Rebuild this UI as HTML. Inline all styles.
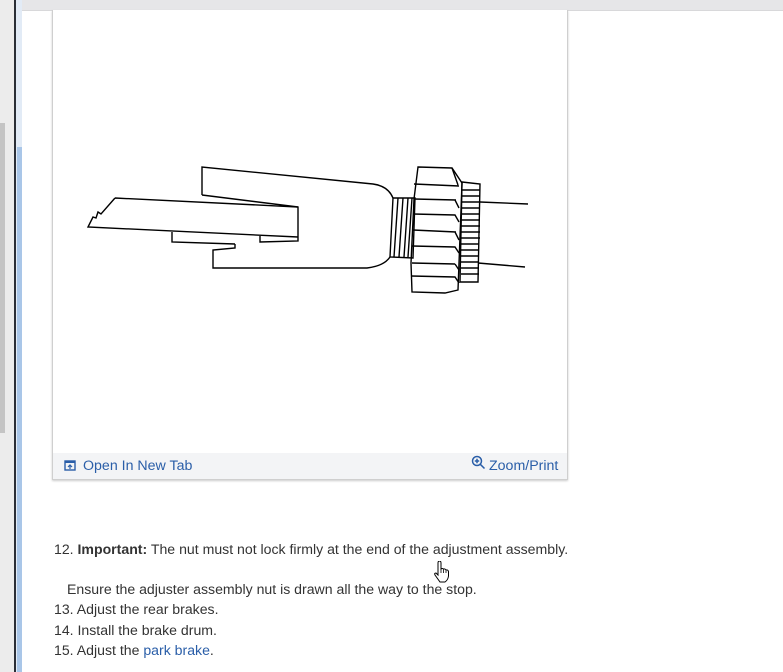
<!DOCTYPE html>
<html><head><style>
body{margin:0;width:783px;height:672px;position:relative;overflow:hidden;background:#fff;font-family:"Liberation Sans",sans-serif;}
.abs{position:absolute}
.t{position:absolute;left:54px;font-size:14.1px;color:#333;line-height:20px;white-space:nowrap}
a{color:#2a5ea8;text-decoration:none}
</style></head><body>
<div class="abs" style="left:0;top:0;width:783px;height:10px;background:#e6e6e8;border-bottom:1px solid #d8d8da"></div>
<div class="abs" style="left:0;top:0;width:14px;height:672px;background:#ececec"></div>
<div class="abs" style="left:0;top:123px;width:5px;height:310px;background:#c4c4c4"></div>
<div class="abs" style="left:14px;top:0;width:2px;height:672px;background:#2a2e36"></div>
<div class="abs" style="left:16px;top:0;width:6px;height:672px;background:#e2ebf6"></div>
<div class="abs" style="left:17px;top:147px;width:5px;height:525px;background:#a9c6e8"></div>
<div class="abs" style="left:52px;top:10px;width:514px;height:469px;border:1px solid #cfcfcf;border-top:none;box-shadow:0 1px 2px #ccc;background:#fff"></div>
<div class="abs" style="left:53px;top:453px;width:514px;height:26px;background:#f3f4f6"></div>
<svg class="abs" style="left:64px;top:460px" width="12" height="12" viewBox="0 0 12 12"><rect x="1" y="1" width="10" height="9" fill="none" stroke="#2a5ea8" stroke-width="1.4"/><rect x="1" y="1" width="10" height="2" fill="#2a5ea8"/><path d="M6 9V5M4 7l2-2 2 2" stroke="#2a5ea8" fill="none" stroke-width="1.2"/></svg>
<div class="abs" style="left:83px;top:457px;font-size:14.2px;color:#2a5ea8;line-height:18px">Open In New Tab</div>
<svg class="abs" style="left:471px;top:455px" width="15" height="15" viewBox="0 0 15 15"><circle cx="6" cy="6" r="4.5" fill="none" stroke="#2a5ea8" stroke-width="1.5"/><path d="M9.3 9.3L13.5 13.5M6 3.8v4.4M3.8 6h4.4" stroke="#2a5ea8" stroke-width="1.5"/></svg>
<div class="abs" style="left:489px;top:457px;font-size:14.2px;color:#2a5ea8;line-height:18px">Zoom/Print</div>
<svg class="abs" style="left:0;top:0" width="783" height="672" fill="none" stroke="#000" stroke-width="1.4">
<path d="M202 195V167L373 184Q388 186 393 198M202 195L298 207"/>
<path d="M115 198L298 207V241L260 242V235M115 198L101 214L98 212L96 218L93 217L88 227L298 237M172 232V242L235 244"/>
<path d="M235 244V248L213 250V268H367Q384 266 390 257"/>
<path d="M393 198H415L413 258L390 257Z M398 198L394 257M403 198L399 257M408 198L404 257M412 198L408 257"/>
<path d="M418 167L452 168L462 183L458 290L445 293L412 292L411 263L414 199Z"/>
<path d="M452 168L458 185M414 184L459 186M414 199L456 200M413 214L455 215L459 222M413 230L456 232M412 246L455 247L459 253M412 263L455 264M411 276L455 277L459 283M455 200L459 208M455 232L459 240M455 264L459 270"/>
<path d="M462 182L480 184L478 282L460 282Z M461 190H480M461 196H480M461 202H480M461 208H480M461 214H480M461 220H480M461 226H480M461 232H480M461 238H480M461 244H479M461 250H479M461 256H479M461 262H479M461 268H479M461 274H479"/>
<path d="M480 202L528 204M478 263L525 267"/>
</svg>
<div class="t" style="top:539px"><span>12. <b>Important:</b> The nut must not lock firmly at the end of the adjustment assembly.</span></div>
<div class="t" style="top:579px;left:67px">Ensure the adjuster assembly nut is drawn all the way to the stop.</div>
<div class="t" style="top:599px">13. Adjust the rear brakes.</div>
<div class="t" style="top:620px">14. Install the brake drum.</div>
<div class="t" style="top:640px">15. Adjust the <a>park brake</a>.</div>
<svg class="abs" style="left:433px;top:561px" width="18" height="22" viewBox="0 0 18 22"><path d="M5 2Q5 0 6.5 0Q8 0 8 2V8Q9 7 10.5 8Q12 7.5 13 9Q15 8.5 15.5 10.5V15Q15 19 12 21H7L2 14Q1 12 3 12L5 14Z" fill="#fff" stroke="#000" stroke-width="1"/><path d="M8 8V12M10.5 8.5V12M13 9.5V12" stroke="#000" stroke-width="0.8"/></svg>
</body></html>
